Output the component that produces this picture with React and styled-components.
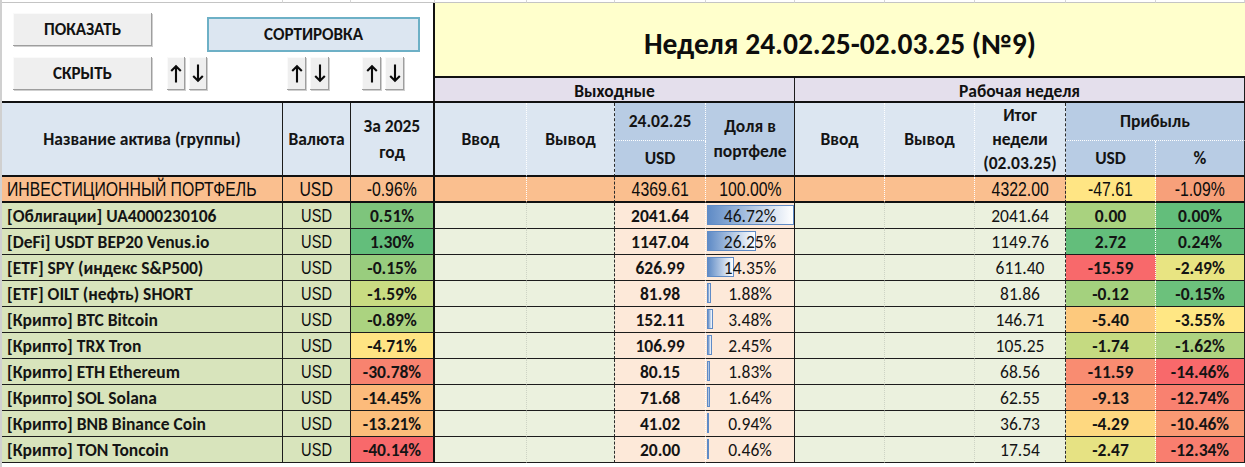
import React from 'react';
import styled, { createGlobalStyle } from 'styled-components';

const CAL = `"Calibri", "Carlito", "Lato", "Noto Sans", sans-serif`;
const NARROW = `"Arial Narrow", "Liberation Sans", sans-serif`;

const LINE = '1px solid #1c1c1c';
const THICK = '2px solid #111';
const DASH = '1px dashed #2a2a2a';
const DOT_W = '1px dotted #ffffff';
const DOT_G = '1px dotted #cdd3c4';

const GlobalStyle = createGlobalStyle`
  html, body { margin: 0; padding: 0; background: #fff; }
  body { font-family: ${CAL}; color: #111; }
`;

const Sheet = styled.div`
  display: grid;
  box-sizing: border-box;
  width: 1245px;
  border-left: 2px solid #d0d0d0;
  grid-template-columns: 281px 68px 84px 92px 88px 91px 89px 90px 90px 91px 90px 89px;
  grid-template-rows: 3px 75px 25px 38px 36px 26px repeat(10, 26px) 4px;
  overflow: hidden;
`;

const Cell = styled.div`
  grid-column: ${(p) => p.$col} / span ${(p) => p.$span || 1};
  grid-row: ${(p) => p.$row} / span ${(p) => p.$rows || 1};
  box-sizing: border-box;
  display: flex;
  align-items: center;
  justify-content: ${(p) => p.$align || 'center'};
  background: ${(p) => p.$bg || 'transparent'};
  border-right: ${(p) => p.$br || 'none'};
  border-bottom: ${(p) => p.$bb || 'none'};
  position: relative;
  white-space: nowrap;
  min-width: 0;
`;

const GhostCell = styled(Cell)`
  border-right: 1px solid #d6d6d6;
  border-bottom: 1px solid #c4c4c4;
`;

const ControlPanel = styled(Cell)`
  display: grid;
  grid-template-columns: 139px 15px 40px 80px 43px 32px 43px 15px;
  grid-template-rows: 33px 33px;
  row-gap: 11px;
  align-content: start;
  align-items: stretch;
  justify-content: start;
  padding: 10px 0 0 11px;
  background: #fff;
`;

const MacroButton = styled.div`
  grid-column: ${(p) => p.$col} / span ${(p) => p.$span || 1};
  grid-row: ${(p) => p.$row};
  display: flex;
  align-items: center;
  justify-content: center;
  background: #efefef;
  box-shadow: inset -1px -1px 0 #9e9e9e, inset 1px 1px 0 #fafafa, 1px 1px 0 #cfcfcf;
  font: 800 17px ${CAL};
  color: #121212;
`;

const SortButton = styled(MacroButton)`
  align-self: start;
  height: 35px;
  margin-top: 4px;
  box-sizing: border-box;
  background: #dce6f1;
  border: 2px solid #6db0c6;
  box-shadow: none;
`;

const ArrowPair = styled.div`
  grid-column: ${(p) => p.$col};
  grid-row: 2;
  display: flex;
  gap: 4px;
`;

const ArrowButton = styled(MacroButton)`
  width: 19px;
  svg {
    transform: ${(p) => (p.$down ? 'rotate(180deg)' : 'none')};
  }
`;

const TitleCell = styled(Cell)`
  background: #ffffcc;
  border-bottom: ${THICK};
  padding-top: 8px;
  font: 700 29.5px ${CAL};
  color: #0d0d0d;
`;

const GroupCell = styled(Cell)`
  background: #e4dfec;
  border-bottom: ${THICK};
  font: 800 17.5px ${CAL};
  padding-top: 2px;
`;

const HeadCell = styled(Cell)`
  flex-direction: column;
  background: ${(p) => (p.$dark ? '#b8cce4' : '#dce6f1')};
  font: 800 17.5px/${(p) => p.$lh || 25}px ${CAL};
  text-align: center;
  color: #141414;
`;

const PortfolioCell = styled(Cell)`
  background: ${(p) => p.$bg || '#fabf8f'};
  border-bottom: ${THICK};
  font: 400 20px ${NARROW};
  color: #0c0c0c;
  padding-left: ${(p) => (p.$align === 'flex-start' ? '5px' : '0')};
`;

const NarrowText = styled.span`
  display: inline-block;
  transform: scaleX(${(p) => p.$scale || 0.79});
  transform-origin: ${(p) => (p.$left ? 'left center' : 'center')};
`;

const DataCell = styled(Cell)`
  border-bottom: ${LINE};
  font: ${(p) => (p.$bold ? 800 : 400)} 17.5px ${CAL};
  color: #141414;
  padding-left: ${(p) => (p.$align === 'flex-start' ? '5px' : '0')};
`;

const CurrencyCell = styled(DataCell)`
  font: 400 18.5px ${NARROW};
  color: #0c0c0c;
`;

const Bar = styled.span`
  position: absolute;
  left: 1px;
  top: 2px;
  bottom: 3px;
  box-sizing: border-box;
  background: linear-gradient(to right, #5f8bc6, #ffffff);
  border: 1px solid #5f8bc6;
`;

const BarText = styled.span`
  position: relative;
`;

const Arrow = () => (
  <svg width="12" height="19" viewBox="0 0 12 19">
    <path d="M6 18.5V2.2M1.2 7L6 2.2L10.8 7" fill="none" stroke="#0a0a0a" strokeWidth="2.1" />
  </svg>
);

const colBorders = [LINE, LINE, THICK, DOT_G, DASH, DOT_W, LINE, DOT_G, DOT_G, DASH, DOT_W, LINE];

const rows = [
  { name: '[Облигации] UA4000230106', y: '0.51%', yc: '#7ec57c', start: '2041.64', share: 46.72, end: '2041.64', pu: '0.00', puc: '#a9d27f', pp: '0.00%', ppc: '#63be7b' },
  { name: '[DeFi] USDT BEP20 Venus.io', y: '1.30%', yc: '#63be7b', start: '1147.04', share: 26.25, end: '1149.76', pu: '2.72', puc: '#63be7b', pp: '0.24%', ppc: '#63be7b' },
  { name: '[ETF] SPY (индекс S&P500)', y: '-0.15%', yc: '#99cd7e', start: '626.99', share: 14.35, end: '611.40', pu: '-15.59', puc: '#f8696b', pp: '-2.49%', ppc: '#e8e482' },
  { name: '[ETF] OILT (нефть) SHORT', y: '-1.59%', yc: '#c9dc82', start: '81.98', share: 1.88, end: '81.86', pu: '-0.12', puc: '#a4d17e', pp: '-0.15%', ppc: '#6cc17c' },
  { name: '[Крипто] BTC Bitcoin', y: '-0.89%', yc: '#abd380', start: '152.11', share: 3.48, end: '146.71', pu: '-5.40', puc: '#fdc97d', pp: '-3.55%', ppc: '#ffe784' },
  { name: '[Крипто] TRX Tron', y: '-4.71%', yc: '#ffe483', start: '106.99', share: 2.45, end: '105.25', pu: '-1.74', puc: '#c5da81', pp: '-1.62%', ppc: '#aed380' },
  { name: '[Крипто] ETH Ethereum', y: '-30.78%', yc: '#f8836f', start: '80.15', share: 1.83, end: '68.56', pu: '-11.59', puc: '#f98c71', pp: '-14.46%', ppc: '#f8696b' },
  { name: '[Крипто] SOL Solana', y: '-14.45%', yc: '#fcbb7b', start: '71.68', share: 1.64, end: '62.55', pu: '-9.13', puc: '#fba576', pp: '-12.74%', ppc: '#f98170' },
  { name: '[Крипто] BNB Binance Coin', y: '-13.21%', yc: '#fcbe7b', start: '41.02', share: 0.94, end: '36.73', pu: '-4.29', puc: '#fed880', pp: '-10.46%', ppc: '#fa9a74' },
  { name: '[Крипто] TON Toncoin', y: '-40.14%', yc: '#f8696b', start: '20.00', share: 0.46, end: '17.54', pu: '-2.47', puc: '#e6e283', pp: '-12.34%', ppc: '#f97e6f' },
];

const MAX_SHARE = 46.72;

const DataRow = ({ r, row }) => {
  const GREEN = '#d8e4bc';
  const LIGHT = '#ebf1de';
  const PEACH = '#fde9d9';
  const barWidth = Math.max(2, Math.round((r.share / MAX_SHARE) * 87));
  return (
    <>
      <DataCell $col={1} $row={row} $bg={GREEN} $br={colBorders[0]} $align="flex-start" $bold>{ r.name }</DataCell>
      <CurrencyCell $col={2} $row={row} $bg={GREEN} $br={colBorders[1]}><NarrowText>USD</NarrowText></CurrencyCell>
      <DataCell $col={3} $row={row} $bg={r.yc} $br={colBorders[2]} $bold>{ r.y }</DataCell>
      <DataCell $col={4} $row={row} $bg={LIGHT} $br={colBorders[3]} />
      <DataCell $col={5} $row={row} $bg={LIGHT} $br={colBorders[4]} />
      <DataCell $col={6} $row={row} $bg={PEACH} $br={colBorders[5]} $bold>{ r.start }</DataCell>
      <DataCell $col={7} $row={row} $bg={PEACH} $br={colBorders[6]}>
        <Bar style={ { width: barWidth } } />
        <BarText>{ r.share.toFixed(2) }%</BarText>
      </DataCell>
      <DataCell $col={8} $row={row} $bg={LIGHT} $br={colBorders[7]} />
      <DataCell $col={9} $row={row} $bg={LIGHT} $br={colBorders[8]} />
      <DataCell $col={10} $row={row} $bg={LIGHT} $br={colBorders[9]}>{ r.end }</DataCell>
      <DataCell $col={11} $row={row} $bg={r.puc} $br={colBorders[10]} $bold>{ r.pu }</DataCell>
      <DataCell $col={12} $row={row} $bg={r.ppc} $br={colBorders[11]} $bold>{ r.pp }</DataCell>
    </>
  );
};

const App = () => {
  return (
    <>
      <GlobalStyle />
      <Sheet>
        { colBorders.map((_, i) => (
          <GhostCell key={ i } $col={ i + 1 } $row={1} />
        )) }

        <ControlPanel $col={1} $span={3} $row={2} $rows={2} $br={THICK} $bb={THICK}>
          <MacroButton $col={1} $row={1}>ПОКАЗАТЬ</MacroButton>
          <MacroButton $col={1} $row={2}>СКРЫТЬ</MacroButton>
          <SortButton $col={4} $span={5} $row={1}>СОРТИРОВКА</SortButton>
          { [3, 5, 7].map((c) => (
            <ArrowPair key={ c } $col={ c }>
              <ArrowButton><Arrow /></ArrowButton>
              <ArrowButton $down><Arrow /></ArrowButton>
            </ArrowPair>
          )) }
        </ControlPanel>

        <TitleCell $col={4} $span={9} $row={2}>Неделя 24.02.25-02.03.25 (№9)</TitleCell>
        <GroupCell $col={4} $span={4} $row={3} $br={LINE}>Выходные</GroupCell>
        <GroupCell $col={8} $span={5} $row={3} $br={LINE}>Рабочая неделя</GroupCell>

        <HeadCell $col={1} $row={4} $rows={2} $br={LINE} $bb={THICK}>Название актива (группы)</HeadCell>
        <HeadCell $col={2} $row={4} $rows={2} $br={LINE} $bb={THICK}>Валюта</HeadCell>
        <HeadCell $col={3} $row={4} $rows={2} $br={THICK} $bb={THICK} $lh={26}><span>За 2025</span><span>год</span></HeadCell>
        <HeadCell $col={4} $row={4} $rows={2} $br={DOT_W} $bb={THICK}>Ввод</HeadCell>
        <HeadCell $col={5} $row={4} $rows={2} $br={DASH} $bb={THICK}>Вывод</HeadCell>
        <HeadCell $col={6} $row={4} $br={DOT_W} $bb={DOT_W} $dark>24.02.25</HeadCell>
        <HeadCell $col={6} $row={5} $br={DOT_W} $bb={THICK} $dark>USD</HeadCell>
        <HeadCell $col={7} $row={4} $rows={2} $br={LINE} $bb={THICK} $dark><span>Доля в</span><span>портфеле</span></HeadCell>
        <HeadCell $col={8} $row={4} $rows={2} $br={DOT_W} $bb={THICK}>Ввод</HeadCell>
        <HeadCell $col={9} $row={4} $rows={2} $br={DOT_W} $bb={THICK}>Вывод</HeadCell>
        <HeadCell $col={10} $row={4} $rows={2} $br={DASH} $bb={THICK} $lh={24}><span>Итог</span><span>недели</span><span>(02.03.25)</span></HeadCell>
        <HeadCell $col={11} $span={2} $row={4} $br={LINE} $bb={DOT_W} $dark>Прибыль</HeadCell>
        <HeadCell $col={11} $row={5} $br={DOT_W} $bb={THICK} $dark>USD</HeadCell>
        <HeadCell $col={12} $row={5} $br={LINE} $bb={THICK} $dark>%</HeadCell>

        <PortfolioCell $col={1} $row={6} $br={colBorders[0]} $align="flex-start"><NarrowText $left>ИНВЕСТИЦИОННЫЙ ПОРТФЕЛЬ</NarrowText></PortfolioCell>
        <PortfolioCell $col={2} $row={6} $br={colBorders[1]}><NarrowText>USD</NarrowText></PortfolioCell>
        <PortfolioCell $col={3} $row={6} $br={colBorders[2]}><NarrowText>-0.96%</NarrowText></PortfolioCell>
        <PortfolioCell $col={4} $row={6} $br={DOT_W} />
        <PortfolioCell $col={5} $row={6} $br={colBorders[4]} />
        <PortfolioCell $col={6} $row={6} $br={DOT_W}><NarrowText>4369.61</NarrowText></PortfolioCell>
        <PortfolioCell $col={7} $row={6} $br={colBorders[6]}><NarrowText>100.00%</NarrowText></PortfolioCell>
        <PortfolioCell $col={8} $row={6} $br={DOT_W} />
        <PortfolioCell $col={9} $row={6} $br={DOT_W} />
        <PortfolioCell $col={10} $row={6} $br={colBorders[9]}><NarrowText>4322.00</NarrowText></PortfolioCell>
        <PortfolioCell $col={11} $row={6} $br={DOT_W} $bg="#ffe584"><NarrowText>-47.61</NarrowText></PortfolioCell>
        <PortfolioCell $col={12} $row={6} $br={LINE} $bg="#f7a07a"><NarrowText>-1.09%</NarrowText></PortfolioCell>

        { rows.map((r, i) => (
          <DataRow key={ r.name } r={ r } row={ 7 + i } />
        )) }
      </Sheet>
    </>
  );
};

export default App;
